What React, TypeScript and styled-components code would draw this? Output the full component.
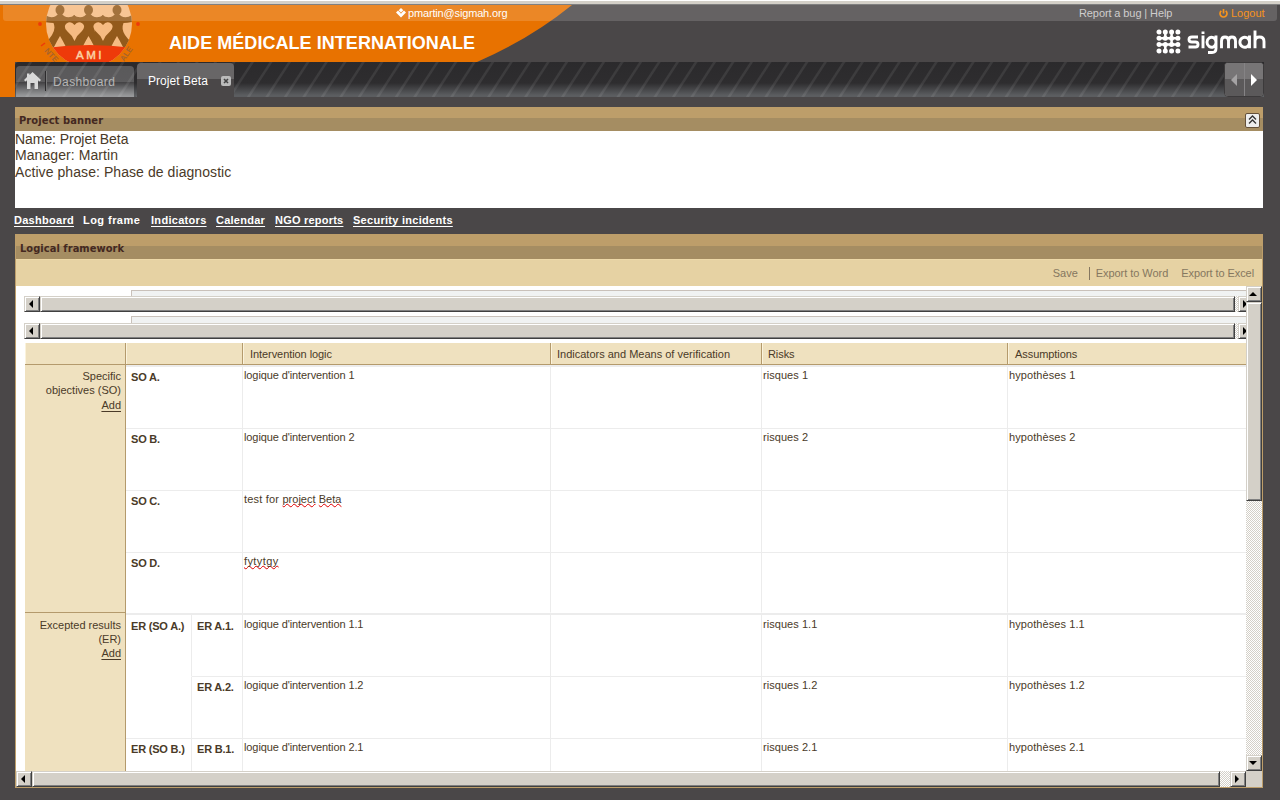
import React from "react";
import styled, { createGlobalStyle } from "styled-components";

const Global = createGlobalStyle`
  * { box-sizing: border-box; }
  html, body { margin: 0; padding: 0; }
  body {
    width: 1280px; height: 800px; overflow: hidden;
    background: #4a4748; color: #4a3a28;
    font: 11px "Liberation Sans", Arial, sans-serif;
  }
`;

const Page = styled.div`
  width: 1280px; height: 800px; overflow: hidden;
  display: flex; flex-direction: column;
`;
const WindowEdge = styled.div`
  height: 5px; flex: none; background: #d4d0c8;
  border-top: 1px solid #fff; border-bottom: 1px solid #808080;
`;
const Header = styled.header`
  position: relative; height: 92px; flex: none;
  display: flex; flex-direction: column;
`;
const Artwork = styled.svg`
  position: absolute; left: 0; top: 0; display: block;
`;
const UserBar = styled.div`
  position: relative; height: 16px; margin: 0 3px;
  display: flex; align-items: center; padding-left: 393px;
  background: rgba(255, 255, 255, 0.15); border-radius: 0 0 3px 3px;
  color: #fff;
`;
const Label = styled.span<{ $ls?: number }>`
  white-space: nowrap; letter-spacing: ${(p) => p.$ls ?? 0}px;
`;
const UserName = styled(Label)`width: 671px; margin-left: 2px; color: #fff;`;
const MetaLinks = styled(Label)`width: 140px; color: #cfcdcd;`;
const Logout = styled(Label)`margin-left: 3px; color: #f7941d;`;
const TitleRow = styled.div`
  position: relative; height: 41px; display: flex; align-items: center;
  justify-content: space-between; padding: 0 14px 0 169px;
`;
const OrgName = styled.h1`
  margin: 0; padding-top: 2px; color: #fff; white-space: nowrap;
  font-size: 18px; line-height: 24px; font-weight: bold; letter-spacing: 0.05px;
`;
const TabStrip = styled.nav`
  position: relative; height: 35px; margin: 0 16px 0 15px;
  display: flex; align-items: flex-end; border-radius: 4px 0 0 0;
  padding-left: 1px; overflow: hidden;
  background:
    repeating-linear-gradient(123deg, transparent 0 11.5px, rgba(255,255,255,0.08) 12.5px 14px, transparent 15px 15.5px),
    linear-gradient(#2b2a2c 0, #2e2d2f 60%, #5b5d60 95%, #5b5d60 100%);
`;
const Tab = styled.div<{ $active?: boolean }>`
  display: flex; align-items: center; flex: none;
  width: ${(p) => (p.$active ? 97 : 118)}px; height: ${(p) => (p.$active ? 34 : 31)}px;
  margin-right: 3px; border-radius: 4px 4px 0 0;
  padding-left: ${(p) => (p.$active ? 11 : 8)}px; padding-top: ${(p) => (p.$active ? 1 : 0)}px;
  color: ${(p) => (p.$active ? "#fff" : "#b5b5b5")}; font-size: 12px;
  background: ${(p) =>
    p.$active
      ? "linear-gradient(#686667 0 16px, #4a4748 16px)"
      : "linear-gradient(rgba(255,255,255,.22) 0 16px, rgba(255,255,255,.1) 16px, rgba(255,255,255,.38) 100%)"};
`;
const HomeIcon = styled.svg`margin-bottom: 3px;`;
const Divider = styled.i`width: 2px; height: 20px; margin: 0 6px 2px 4px; background: #2c2b2d; border-right: 1px solid #777;`;
const CloseIcon = styled.svg`margin-left: 13px;`;
const Pager = styled.div`
  margin-left: auto; width: 40px; height: 35px; display: flex; gap: 1px;
  background: #858385; border: 1px solid #3c3a3b; border-radius: 4px; overflow: hidden;
`;
const PagerButton = styled.button`
  flex: 1; padding: 0; border: 0; display: flex; align-items: center; justify-content: center;
  background: linear-gradient(#777576 0 16px, #5b595a 16px);
`;

const heading = `
  height: 24px; flex: none; display: flex; align-items: center; justify-content: space-between;
  font: bold 11px "DejaVu Sans Condensed", "DejaVu Sans", sans-serif; color: #442820;
  background: linear-gradient(#bd9e6a 0 11px, #a58d62 11px);
`;
const BannerPanel = styled.section`margin: 10px 17px 0 15px; height: 101px; flex: none; background: #fff;`;
const BannerHead = styled.div`${heading} padding: 2px 3px 0 4px;`;
const Collapse = styled.button`
  width: 15px; height: 15px; padding: 0; border: 1px solid #65513a; border-radius: 2px;
  background: #eee; display: flex; align-items: center; justify-content: center;
`;
const BannerLine = styled.p<{ $ls: number }>`
  margin: 0; font-size: 14px; line-height: 16.4px; letter-spacing: ${(p) => p.$ls}px; white-space: nowrap;
`;
const Links = styled.nav`
  height: 26px; flex: none; margin-left: 14px; padding-bottom: 2px; display: flex; align-items: center;
  color: #fff; font: bold 11px "Liberation Sans", sans-serif;
`;
const LinkItem = styled.span<{ $w: number; $plain?: boolean; $ls: number }>`
  width: ${(p) => p.$w}px; letter-spacing: ${(p) => p.$ls}px; white-space: nowrap;
  text-decoration: ${(p) => (p.$plain ? "none" : "underline")}; text-underline-offset: 2px;
  text-decoration-skip-ink: none;
`;

const FramePanel = styled.section`
  margin: 0 17px 0 15px; height: 554px; flex: none; display: flex; flex-direction: column;
  border: 1px solid #bd9e6a; background: #fff;
`;
const FrameHead = styled.div`${heading} padding: 2px 4px 0;`;
const Toolbar = styled.div`
  height: 27px; flex: none; display: flex; align-items: center; justify-content: flex-end;
  padding-right: 8px; background: #e6d2a3; color: #857760; border-top: 1px solid #eed9a8;
`;
const ToolLabel = styled(Label)`& + & { margin-left: 13px; }`;
const ToolDivider = styled.i`width: 1px; height: 13px; margin: 0 6px 0 11px; background: #857760;`;
const Viewport = styled.div`flex: 1; min-height: 0; display: grid; grid-template: 485px 16px / 1230px 16px;`;
const Content = styled.div`overflow: hidden; padding-left: 8px;`;

const FieldRow = styled.div<{ $h: number; $top: number }>`
  height: ${(p) => p.$h}px; padding: ${(p) => p.$top}px 0 0 107px;
`;
const FieldTop = styled.div`height: 100%; border: solid #c9c1ba; border-width: 1px 0 0 1px; background: #f0f2f2;`;

const Track = styled.div<{ $v?: boolean; $w?: number }>`
  display: flex; flex-direction: ${(p) => (p.$v ? "column" : "row")};
  width: ${(p) => (p.$v ? "16px" : p.$w + "px")}; height: ${(p) => (p.$v ? "100%" : "16px")};
  background: repeating-conic-gradient(#fff 0 25%, #d4d0c8 0 50%) 0 0 / 2px 2px;
`;
const Bevel = styled.div<{ $size?: number }>`
  flex: 0 0 ${(p) => p.$size ?? 16}px; display: flex; align-items: center; justify-content: center;
  padding: 0 2px 1px 0;
  background: #d4d0c8; border: 1px solid; border-color: #d4d0c8 #404040 #404040 #d4d0c8;
  box-shadow: inset 1px 1px #fff, inset -1px -1px #808080;
`;
const TrackGap = styled.div`flex: 1;`;
const Corner = styled.div`background: #d4d0c8;`;

const Table = styled.div`width: 1221px; margin: 4px 0 0 1px; display: flex; flex-direction: column;`;
const columns = "101px 117px 308px 211px 246px 1fr";
const HeadRow = styled.div`display: grid; grid-template: 22px / ${columns}; background: #efe1bf;`;
const HeadCell = styled.div<{ $pad?: number; $ls?: number }>`
  border-right: 1px solid #b49a6c; border-bottom: 1px solid #b49a6c;
  box-shadow: inset 1px 0 #fbf3dc; padding: 0 0 0 ${(p) => p.$pad ?? 7}px; line-height: 22px; white-space: nowrap;
  letter-spacing: ${(p) => p.$ls ?? -0.07}px;
  &:last-child { border-right: 0; }
`;
const Section = styled.div<{ $h: number }>`display: grid; grid-template: ${(p) => p.$h}px / 101px 1fr;`;
const SideCell = styled.div<{ $top: number }>`
  background: #efe1bf; border-right: 1px solid #b49a6c; border-bottom: 1px solid #b49a6c;
  padding: ${(p) => p.$top}px 4px 0 0; text-align: right; line-height: 14px;
`;
const AddLink = styled.div<{ $lh: number }>`
  text-decoration: underline; line-height: ${(p) => p.$lh}px; text-underline-offset: 2px;
`;
const Rows = styled.div`border-top: 2px solid #ececec;`;
const Row = styled.div<{ $h: number; $drop?: number; $last?: boolean }>`
  display: grid; grid-template: ${(p) => p.$h}px / 117px 308px 211px 246px 1fr;
  --drop: ${(p) => p.$drop ?? 0}px; --line: ${(p) => (p.$last ? "transparent" : "#ececec")};
`;
const Cell = styled.div<{ $ls?: number }>`
  border-right: 1px solid #ececec; border-bottom: 1px solid var(--line);
  padding: calc(1px + var(--drop)) 0 0 1px; line-height: 14px;
  white-space: nowrap; letter-spacing: ${(p) => p.$ls ?? -0.1}px;
  &:last-child { border-right: 0; }
`;
const CodeCell = styled(Cell)<{ $split?: boolean }>`
  padding: 0; display: grid; grid-template-columns: ${(p) => (p.$split ? "66px 1fr" : "1fr")};
  border-bottom: 0;
`;
const Code = styled.div<{ $open?: boolean; $line?: boolean }>`
  padding: calc(3px + var(--drop)) 0 0 5px; font-weight: bold; letter-spacing: -0.2px;
  border-bottom: 1px solid ${(p) => (p.$open ? "transparent" : "var(--line)")};
  border-right: ${(p) => (p.$line ? "1px solid #ececec" : "0")};
`;
const Misspelled = styled.span<{ $ls?: number }>`
  letter-spacing: ${(p) => p.$ls ?? 0}px; text-decoration: underline wavy #e00000 1px;
  text-underline-offset: 0; text-decoration-skip-ink: none;
`;

type Dir = "left" | "right" | "up" | "down";
const arrows: Record<Dir, string> = {
  left: "M6 0V8L2 4Z", right: "M2 0V8L6 4Z", up: "M0 6H8L4 2Z", down: "M0 2H8L4 6Z",
};
const Arrow = ({ dir, color = "#000", size = 8 }: { dir: Dir; color?: string; size?: number }) => (
  <svg width={size} height={size} viewBox="0 0 8 8"><path d={arrows[dir]} fill={color} /></svg>
);

const HBar = ({ width, thumb }: { width: number; thumb: number }) => (
  <Track $w={width}>
    <Bevel><Arrow dir="left" /></Bevel>
    <Bevel $size={thumb} />
    <TrackGap />
    <Bevel><Arrow dir="right" /></Bevel>
  </Track>
);

const person = (x: number) => (
  <g key={x} transform={`translate(${x} 0)`}>
    <ellipse cx="0" cy="5" rx="4.5" ry="5" />
    <path d="M-15 10Q-9 14-4 11L-2 9H2L4 11Q9 14 15 10V17Q10 18 6.500 18Q4 24 8 30Q11 35 15 37V42H6Q3 36 0 31Q-3 36-6 42H-15V37Q-11 35-8 30Q-4 24-6.500 18Q-10 18-15 17Z" />
  </g>
);

const HeaderArt = () => (
  <Artwork width="1280" height="92" viewBox="0 0 1280 92">
    <path d="M0 0H572Q530 34 477 57H15V92H0Z" fill="#e87200" />
    <defs><clipPath id="seal"><circle cx="89" cy="19" r="43" /></clipPath></defs>
    <g clipPath="url(#seal)">
      <rect x="40" y="-24" width="100" height="90" fill="#f6bb82" />
      <g fill="#935a1b">
        {[60, 88.5, 117].map(person)}
        <rect x="66" y="17" width="17" height="22" />
        <rect x="94.500" y="17" width="17" height="22" />
      </g>
      <path d="M40 44Q89 36 140 44V66H40Z" fill="#ee3a0a" />
      <g fill="#f6bb82">
        <path d="M74.500 36Q72 30 67 26Q63 21 66.500 18.500Q71 15.500 74.500 20Q78 15.500 82.500 18.500Q86 21 82 26Q77 30 74.500 36Z" />
        <path d="M103 36Q100.500 30 95.500 26Q91.500 21 95 18.500Q99.500 15.500 103 20Q106.500 15.500 111 18.500Q114.500 21 110.500 26Q105.500 30 103 36Z" />
      </g>
    </g>
    <circle cx="40" cy="19" r="1.900" fill="#ee3a0a" /><circle cx="138" cy="19" r="1.900" fill="#ee3a0a" />
    <path d="M41 41L45 38" stroke="#ee3a0a" strokeWidth="1.500" />
    <text x="90" y="54" textAnchor="middle" fontSize="11.500" letterSpacing="2.500" fontFamily="Liberation Sans" fill="#fbd1a3" stroke="#fbd1a3" strokeWidth=".5">AMI</text>
    <g fontFamily="Liberation Sans" fontSize="8" fontWeight="bold" fill="#a8642a">
      <text transform="translate(44 46) rotate(48)">NTE</text>
      <text transform="translate(124 57) rotate(-55)">ALE</text>
    </g>
  </Artwork>
);

const SigmahLogo = () => (
  <svg width="110" height="26" viewBox="0 -1 110 26">
    <g fill="#fff" stroke="#fff" strokeWidth="1.800">
      {[3, 9.3, 15.6, 21.9].flatMap((x) => [2, 8.3, 14.6, 20.9].map((y) => <circle key={`${x}-${y}`} cx={x} cy={y} r="1.600" />))}
      <path fill="none" strokeWidth="2.500" d="M9.300 2V8.300M15.600 2V14.600M3 8.300H21.900M3 14.600H21.900M9.300 14.600V20.900" />
    </g>
    <g fill="none" stroke="#fff" strokeWidth="2.900" strokeLinejoin="round">
      <path d="M42 7H36Q33 7 33 9.500T36 12H39.500Q42 12 42 14.500T39.500 17H32.500" />
      <path d="M47 5.500V18.300M47 1.500V4" />
      <path d="M60 5.500V18.500Q60 22.500 56 22.500H52M60 12A4.500 5 0 1 0 60 12.500" />
      <path d="M65.500 18.300V11Q65.500 7 69 7T72.500 11V18.300M72.500 11Q72.500 7 76 7T79.500 11V18.300" />
      <path d="M93.500 5.500V18.300M93.500 12A4.800 5 0 1 0 93.500 12.500" />
      <path d="M99 .500V18.300M99 11.500Q99 7 103.500 7T108 11.500V18.300" />
    </g>
  </svg>
);

const soRows = [
  ["SO A.", "logique d'intervention 1", "risques 1", "hypothèses 1"],
  ["SO B.", "logique d'intervention 2", "risques 2", "hypothèses 2"],
  ["SO C.", <Label $ls={0.2}>test for <Misspelled>project</Misspelled> <Misspelled>Beta</Misspelled></Label>, "", ""],
  ["SO D.", <Misspelled $ls={0.4}>fytytgy</Misspelled>, "", ""],
];
const erRows = [
  ["ER (SO A.)", "ER A.1.", "1.1", true],
  ["", "ER A.2.", "1.2", false],
  ["ER (SO B.)", "ER B.1.", "2.1", false],
] as const;

export default function App() {
  return (
    <Page>
      <Global />
      <WindowEdge />
      <Header>
        <HeaderArt />
        <UserBar>
          <svg width="10" height="10" viewBox="0 0 10 10" fill="#fff"><path d="M5 0L7.300 2.300L5 4.600L2.700 2.300ZM2 2.500L4.300 4.800L5 5.800L5.700 4.800L8 2.500L10 4.500L5 9.500L0 4.500Z" /></svg>
          <UserName $ls={-0.16}>pmartin@sigmah.org</UserName>
          <MetaLinks $ls={-0.1}>Report a bug | Help</MetaLinks>
          <svg width="9" height="9" viewBox="0 0 9 9" fill="none" stroke="#f7941d" strokeWidth="1.700"><path d="M2.300 1.800A3.500 3.500 0 1 0 6.700 1.800M4.500 0V4.500" /></svg>
          <Logout>Logout</Logout>
        </UserBar>
        <TitleRow><OrgName>AIDE MÉDICALE INTERNATIONALE</OrgName><SigmahLogo /></TitleRow>
        <TabStrip>
          <Tab>
            <HomeIcon width="17" height="17" viewBox="0 0 17 17" fill="#d9d9d9"><path d="M8.500 0L17 8L15.500 9.500L14 8.200V17H10.500V11H6.500V17H3V8.200L1.500 9.500L0 8L3 5V1.500H5.500V3Z" /></HomeIcon>
            <Divider />
            <Label $ls={0.4}>Dashboard</Label>
          </Tab>
          <Tab $active>
            <Label $ls={0.05}>Projet Beta</Label>
            <CloseIcon width="10" height="10" viewBox="0 0 10 10"><rect width="10" height="10" rx="2" fill="#bbb" /><path d="M3 3L7 7M7 3L3 7" stroke="#444" strokeWidth="1.600" /></CloseIcon>
          </Tab>
          <Pager>
            <PagerButton><Arrow dir="left" color="#a5a3a4" size={12} /></PagerButton>
            <PagerButton><Arrow dir="right" color="#fff" size={12} /></PagerButton>
          </Pager>
        </TabStrip>
      </Header>

      <BannerPanel>
        <BannerHead>
          <Label $ls={0.12}>Project banner</Label>
          <Collapse><svg width="9" height="10" viewBox="0 0 9 10" fill="none" stroke="#333" strokeWidth="1.300"><path d="M1 4.500L4.500 1L8 4.500M1 8.500L4.500 5L8 8.500" /></svg></Collapse>
        </BannerHead>
        <BannerLine $ls={-0.06}>Name: Projet Beta</BannerLine>
        <BannerLine $ls={0.08}>Manager: Martin</BannerLine>
        <BannerLine $ls={0.07}>Active phase: Phase de diagnostic</BannerLine>
      </BannerPanel>

      <Links>
        <LinkItem $w={69} $ls={0.28}>Dashboard</LinkItem>
        <LinkItem $w={68} $ls={0.45} $plain>Log frame</LinkItem>
        <LinkItem $w={65} $ls={0.3}>Indicators</LinkItem>
        <LinkItem $w={59} $ls={0.25}>Calendar</LinkItem>
        <LinkItem $w={78} $ls={0.22}>NGO reports</LinkItem>
        <LinkItem $w={120} $ls={0.28}>Security incidents</LinkItem>
      </Links>

      <FramePanel>
        <FrameHead><Label $ls={0.05}>Logical framework</Label></FrameHead>
        <Toolbar>
          <ToolLabel>Save</ToolLabel><ToolDivider />
          <ToolLabel $ls={-0.05}>Export to Word</ToolLabel>
          <ToolLabel $ls={-0.08}>Export to Excel</ToolLabel>
        </Toolbar>
        <Viewport>
          <Content>
            <FieldRow $h={10} $top={4}><FieldTop /></FieldRow>
            <HBar width={1230} thumb={1195} />
            <FieldRow $h={11} $top={4}><FieldTop /></FieldRow>
            <HBar width={1230} thumb={1195} />
            <Table>
              <HeadRow>
                <HeadCell /><HeadCell />
                <HeadCell>Intervention logic</HeadCell>
                <HeadCell $pad={6} $ls={0}>Indicators and Means of verification</HeadCell>
                <HeadCell $pad={6}>Risks</HeadCell>
                <HeadCell>Assumptions</HeadCell>
              </HeadRow>
              <Section $h={248}>
                <SideCell $top={4}>Specific<br />objectives (SO)<AddLink $lh={16}>Add</AddLink></SideCell>
                <Rows>
                  {soRows.map(([code, logic, risk, hyp], i) => (
                    <Row key={i} $h={i === 3 ? 60 : 62} $last={i === 3}>
                      <CodeCell><Code>{code}</Code></CodeCell>
                      <Cell>{logic}</Cell><Cell /><Cell $ls={0.05}>{risk}</Cell><Cell $ls={0.08}>{hyp}</Cell>
                    </Row>
                  ))}
                </Rows>
              </Section>
              <Section $h={200}>
                <SideCell $top={5}>Excepted results<br />(ER)<AddLink $lh={15}>Add</AddLink></SideCell>
                <Rows>
                  {erRows.map(([group, code, n, open], i) => (
                    <Row key={code} $h={62} $drop={i === 0 ? 1 : 0}>
                      <CodeCell $split><Code $open={open} $line>{group}</Code><Code>{code}</Code></CodeCell>
                      <Cell>logique d'intervention {n}</Cell><Cell /><Cell $ls={0.05}>risques {n}</Cell><Cell $ls={0.08}>hypothèses {n}</Cell>
                    </Row>
                  ))}
                </Rows>
              </Section>
            </Table>
          </Content>
          <Track $v>
            <Bevel><Arrow dir="up" /></Bevel>
            <Bevel $size={199} />
            <TrackGap />
            <Bevel><Arrow dir="down" /></Bevel>
          </Track>
          <HBar width={1230} thumb={1188} />
          <Corner />
        </Viewport>
      </FramePanel>
    </Page>
  );
}
